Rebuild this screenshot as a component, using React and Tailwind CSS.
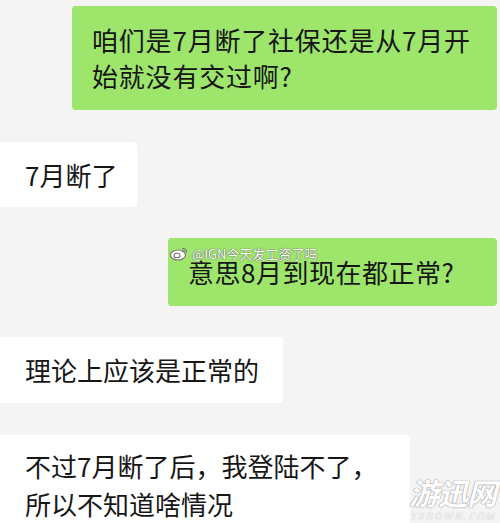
import React from "react";

const font = { fontFamily: '"Noto Sans CJK SC", "Noto Sans", sans-serif' };

const Weibo = () => (
  <svg width="18" height="15" viewBox="0 0 18 15">
    <ellipse cx="8" cy="9" rx="7.5" ry="5" fill="#fff" stroke="#777" strokeWidth="1.2" />
    <ellipse cx="7" cy="9.5" rx="3" ry="2.3" fill="none" stroke="#777" strokeWidth="1.1" />
    <path d="M12 2.5 A4 4 0 0 1 16.5 6.5" fill="none" stroke="#777" strokeWidth="1.2" />
    <path d="M12.2 4.6 A2 2 0 0 1 14.4 6.6" fill="none" stroke="#777" strokeWidth="1.1" />
  </svg>
);

const App = () => {
  return (
    <div className="relative w-[500px] h-[523px] overflow-hidden bg-[#f4f4f4]" style={font}>
      <div className="flex flex-col pt-[6px] text-[26px] text-[#161616]">
        {/* 1 */}
        <div className="flex justify-end pr-[3px]">
          <div className="w-[425px] rounded-[4px] bg-[#9de56b] pl-[20px] pr-[10px] py-[16px] leading-[36px] tracking-[0.8px]">
            咱们是7月断了社保还是从7月开始就没有交过啊?
          </div>
        </div>
        {/* 2 */}
        <div className="flex mt-[32px]">
          <div className="w-[137px] h-[65px] rounded-r-[4px] bg-white pl-[25px] flex items-center leading-[36px]">
            7月断了
          </div>
        </div>
        {/* 3 */}
        <div className="flex justify-end pr-[3px] mt-[31px]">
          <div className="w-[329px] h-[68px] rounded-[4px] bg-[#9de56b] pl-[20px] flex items-center leading-[36px] tracking-[0.5px]">
            意思8月到现在都正常?
          </div>
        </div>
        {/* 4 */}
        <div className="flex mt-[31px]">
          <div className="w-[283px] h-[66px] rounded-r-[4px] bg-white pl-[25px] flex items-center leading-[36px]">
            理论上应该是正常的
          </div>
        </div>
        {/* 5 */}
        <div className="flex mt-[32px]">
          <div className="w-[410px] h-[100px] rounded-tr-[4px] bg-white pl-[25px] pt-[12px] leading-[38px]">
            不过7月断了后，我登陆不了，
            <br />
            所以不知道啥情况
          </div>
        </div>
      </div>

      {/* weibo watermark */}
      <div className="absolute left-[170px] top-[246px] flex items-center gap-[4px]">
        <Weibo />
        <span
          className="text-[13px] leading-none text-white"
          style={{ textShadow: "0 0 1px #555, 0 0 1px #555" }}
        >
          @IGN今天发工资了吗
        </span>
      </div>

      {/* site logo */}
      <div className="absolute right-[4px] bottom-[2px] flex flex-col items-end">
        <span
          className="text-[30px] leading-none italic font-bold text-white tracking-[-1px]"
          style={{ textShadow: "0 0 1px #888, 0 0 1px #888" }}
        >
          游迅网
        </span>
        <span
          className="text-[10px] leading-none italic text-white tracking-[2px] mt-[4px]"
          style={{ textShadow: "0 0 1px #999" }}
        >
          YXDOWN.COM
        </span>
      </div>
    </div>
  );
};

export default App;
